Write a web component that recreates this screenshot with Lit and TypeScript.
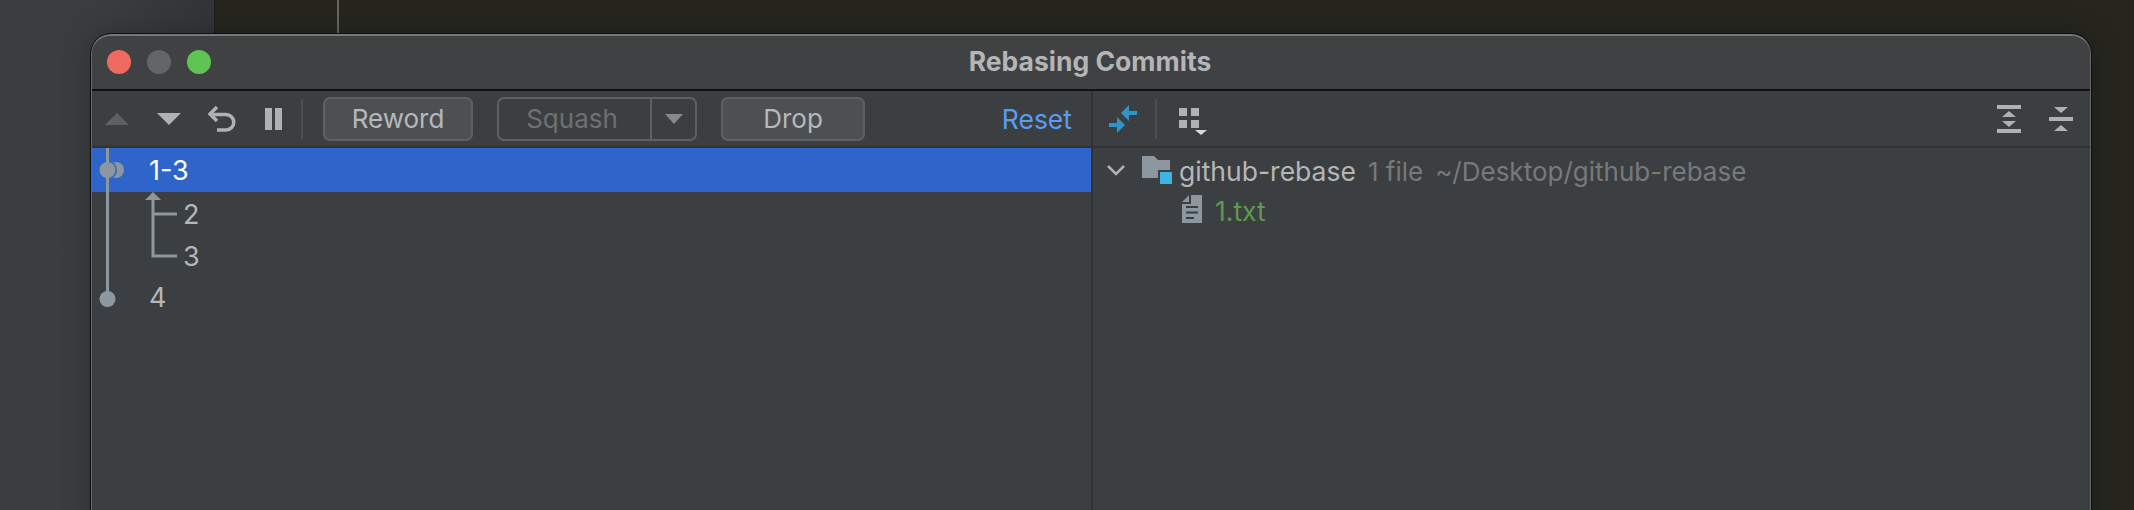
import { LitElement, html, css } from "lit";
import { customElement } from "lit/decorators.js";

@customElement("app-root")
export class AppRoot extends LitElement {
  static styles = css`
    :host { display: block; width: 2134px; height: 510px; position: relative; overflow: hidden; background: #26261f; font-family: Inter, "Liberation Sans", sans-serif; }
    * { box-sizing: border-box; }
    .sidebar { position: absolute; left: 0; top: 0; width: 215px; height: 510px; background: linear-gradient(90deg, #3b3e40 0%, #3a3d3f 50%, #323538 100%); border-right: 1px solid #1e1f1c; }
    .guide { position: absolute; left: 337px; top: 0; width: 2px; height: 40px; background: #66665d; }
    .window { position: absolute; left: 91px; top: 34px; width: 2000px; height: 520px; border-radius: 20px 20px 0 0; background: #3c3f41; display: flex; flex-direction: column; overflow: hidden; border: 1px solid #66686a; border-top: 2px solid #75777a; box-shadow: 0 0 0 1px #0f0f0f, 0 0 30px rgba(0,0,0,.25); }
    .titlebar { height: 56px; flex: none; background: #404143; border-bottom: 2px solid #111; display: flex; align-items: center; position: relative; padding-left: 15px; gap: 16px; margin-top: -1px; }
    .light { width: 24px; height: 24px; border-radius: 50%; }
    .red { background: #ee6a5f; } .gray { background: #646567; } .green { background: #5fc454; }
    .title { position: absolute; left: -2px; right: 0; text-align: center; font-size: 26.5px; font-weight: 700; color: #b4b5b7; top: 11px; line-height: 30px; }
    .body { display: flex; flex: 1; }
    .left { width: 999px; flex: none; position: relative; }
    .split { width: 2px; flex: none; background: #323232; }
    .right { flex: 1; }
    .toolbar { height: 57px; display: flex; align-items: center; border-bottom: 2px solid #323232; background: #3c3f41; }
    .ltb { padding-left: 13px; }
    .rtb { padding-left: 16px; }
    .ic { display: block; flex: none; }
    .sep { width: 2px; height: 40px; background: #4b4e50; flex: none; }
    .btn { height: 44px; border-radius: 7px; background: #4c5052; border: 2px solid #5e6162; color: #b6b8ba; font-size: 26px; line-height: 40px; text-align: center; flex: none; }
    .reword { width: 150px; margin-left: 20px; }
    .combo { width: 200px; margin-left: 24px; display: flex; background: #3c3f41; color: #6e7071; padding: 0; }
    .combo .lab { flex: 1; border-right: 2px solid #5e6162; padding-right: 5px; }
    .combo .arr { width: 43px; display: flex; align-items: center; justify-content: center; }
    .drop { width: 144px; margin-left: 24px; }
    .reset { color: #589df6; font-size: 26.5px; margin-left: auto; margin-right: 19px; }
    .rows { position: relative; font-size: 27px; color: #b4b6b8; }
    .row { height: 42px; line-height: 44px; }
    .row.sel { height: 44px; line-height: 46px; background: #2f65ca; color: #fff; padding-left: 57px; }
    .row.c2 { padding-left: 91px; margin-top: 1px; }
    .row.c3 { padding-left: 91px; }
    .row.c4 { padding-left: 57px; line-height: 42px; }
    .graph { position: absolute; left: 0; top: 0; }
    .tree { font-size: 26.5px; color: #b4b6b8; }
    .n1 { display: flex; align-items: center; height: 42px; margin-top: 1px; padding-left: 14px; }
    .n1 .lab { position: relative; top: 1px; }
    .n2 { display: flex; align-items: center; height: 36px; padding-left: 89px; }
    .n2 span { position: relative; top: 2px; }
    .fold { margin-left: 17px; margin-right: 7px; }
    .dim { color: #77797b; font-size: 26px; margin-left: 12px; white-space: pre; position: relative; top: 1px; }
    .green-t { color: #5c9a4f; margin-left: 13px; }
  `;

  render() {
    return html`
      <div class="sidebar"></div>
      <div class="guide"></div>
      <div class="window">
        <div class="titlebar">
          <div class="light red"></div><div class="light gray"></div><div class="light green"></div>
          <div class="title">Rebasing Commits</div>
        </div>
        <div class="body">
          <div class="left">
            <div class="toolbar ltb">
              <svg class="ic" width="24" height="12" viewBox="0 0 24 12"><path d="M12 0L24 12H0Z" fill="#5f6061"/></svg>
              <svg class="ic" style="margin-left:28px" width="24" height="12" viewBox="0 0 24 12"><path d="M0 0H24L12 12Z" fill="#afb1b3"/></svg>
              <svg class="ic" style="margin-left:27px" width="28" height="26" viewBox="0 0 28 26"><path d="M9 1L2 8l7 7" fill="none" stroke="#afb1b3" stroke-width="3.5"/><path d="M3 8.500H18a7.500 7.500 0 0 1 0 15.500H9" fill="none" stroke="#afb1b3" stroke-width="3.5"/></svg>
              <svg class="ic" style="margin-left:29px" width="17" height="22" viewBox="0 0 17 22"><path d="M0 0H7V22H0ZM10 0H17V22H10Z" fill="#afb1b3"/></svg>
              <div class="sep" style="margin-left:19px"></div>
              <div class="btn reword">Reword</div>
              <div class="btn combo">
                <div class="lab">Squash</div>
                <div class="arr"><svg width="18" height="10" viewBox="0 0 18 10"><path d="M0 0H18L9 10Z" fill="#87898a"/></svg></div>
              </div>
              <div class="btn drop">Drop</div>
              <div class="reset">Reset</div>
            </div>
            <div class="rows">
              <div class="row sel">1-3</div>
              <div class="row c2">2</div>
              <div class="row c3">3</div>
              <div class="row c4">4</div>
              <svg class="graph" width="110" height="180" viewBox="0 0 110 180">
                <circle cx="24" cy="22" r="8" fill="#8c979f"/>
                <circle cx="15.500" cy="22" r="9.500" fill="#2f65ca"/>
                <circle cx="15.500" cy="22" r="8" fill="#8c979f"/>
                <rect x="14" y="0" width="3" height="151" fill="#8c979f"/>
                <circle cx="15.500" cy="151" r="8" fill="#8c979f"/>
                <path d="M61 44l8 8H53Z" fill="#8c979f"/>
                <path d="M61 50V108H85M61 66H85" fill="none" stroke="#8c979f" stroke-width="3"/>
              </svg>
            </div>
          </div>
          <div class="split"></div>
          <div class="right">
            <div class="toolbar rtb">
              <svg class="ic" width="28" height="28" viewBox="0 0 28 28"><path d="M12 8L20 0V6H28V10H20V16Z" fill="#2f95c9"/><path d="M16 20L8 12V18H0V22H8V28Z" fill="#2f95c9"/></svg>
              <div class="sep" style="margin-left:18px"></div>
              <svg class="ic" style="margin-left:22px" width="30" height="32" viewBox="0 0 30 32"><path d="M0 5h8v8H0zM12 5h8v8h-8zM0 17h8v8H0zM12 17h8v8h-8z" fill="#afb1b3"/><path d="M16 27h12l-6 5z" fill="#d8d9da"/></svg>
              <div style="flex:1"></div>
              <svg class="ic" width="24" height="28" viewBox="0 0 24 28"><path d="M0 0h24v4H0zM0 24h24v4H0zM12 6l7 6H5zM5 16h14l-7 6z" fill="#afb1b3"/></svg>
              <svg class="ic" style="margin-left:28px;margin-right:17px" width="24" height="24" viewBox="0 0 24 24"><path d="M5 0h14l-7 6zM0 10h24v4H0zM12 18l7 6H5z" fill="#afb1b3"/></svg>
            </div>
            <div class="tree">
              <div class="n1">
                <svg class="ic" width="18" height="12" viewBox="0 0 18 12"><path d="M1 2l8 8 8-8" fill="none" stroke="#afb1b3" stroke-width="2.5"/></svg>
                <svg class="ic fold" width="30" height="28" viewBox="0 0 30 28"><path d="M0 0H12L16 4H28V14H16V22H0Z" fill="#8c979f"/><rect x="18" y="16" width="12" height="12" fill="#3db4e4"/></svg>
                <span class="lab">github-rebase</span><span class="dim">1 file</span><span class="dim">~/Desktop/github-rebase</span>
              </div>
              <div class="n2">
                <svg class="ic" width="20" height="28" viewBox="0 0 20 28"><path d="M9 0H20V28H0V9H9ZM0 7L7 0V7Z" fill="#8c979f"/><path d="M4 11h12v2H4zM4 16.500h12v2H4zM4 22h8v2H4z" fill="#3c3f41"/></svg>
                <span class="green-t">1.txt</span>
              </div>
            </div>
          </div>
        </div>
      </div>
    `;
  }
}
